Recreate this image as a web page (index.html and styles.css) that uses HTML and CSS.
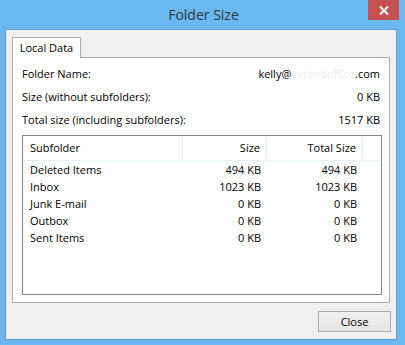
FILE: index.html
```html
<!DOCTYPE html>
<html lang="en">
<head>
<meta charset="utf-8">
<title>Folder Size</title>
<link rel="stylesheet" href="styles.css">
</head>
<body>
<div class="window">
  <div class="titlebar">
    <div class="title">Folder Size</div>
    <div class="close-btn">
      <svg width="10" height="9" viewBox="0 0 10 9" aria-hidden="true"><path d="M1 0.5 L9 8.5 M9 0.5 L1 8.5" stroke="#fff" stroke-width="2"/></svg>
    </div>
  </div>
  <div class="client">
    <div class="tabs">
      <div class="tab">Local Data</div>
    </div>
    <div class="panel">
      <div class="info">
        <div class="info-row"><span>Folder Name:</span><span>kelly@<span class="wm">extendoffice</span>.com</span></div>
        <div class="info-row"><span>Size (without subfolders):</span><span>0 KB</span></div>
        <div class="info-row"><span>Total size (including subfolders):</span><span>1517 KB</span></div>
      </div>
      <div class="list">
        <div class="list-head">
          <div class="hc">Subfolder</div>
          <div class="hc num">Size</div>
          <div class="hc num">Total Size</div>
          <div class="hc last"></div>
        </div>
        <div class="list-row"><div>Deleted Items</div><div class="num">494 KB</div><div class="num">494 KB</div></div>
        <div class="list-row"><div>Inbox</div><div class="num">1023 KB</div><div class="num">1023 KB</div></div>
        <div class="list-row"><div>Junk E-mail</div><div class="num">0 KB</div><div class="num">0 KB</div></div>
        <div class="list-row"><div>Outbox</div><div class="num">0 KB</div><div class="num">0 KB</div></div>
        <div class="list-row"><div>Sent Items</div><div class="num">0 KB</div><div class="num">0 KB</div></div>
      </div>
    </div>
    <div class="footer">
      <button class="btn" type="button">Close</button>
    </div>
  </div>
</div>
</body>
</html>
```

FILE: styles.css
```css
html, body {
  margin: 0;
  padding: 0;
}
body {
  width: 405px;
  height: 345px;
  background: #6ab8ef;
  font-family: "Open Sans", "Noto Sans", sans-serif;
  font-size: 11px;
  color: #000;
  overflow: hidden;
}
.window {
  display: flex;
  flex-direction: column;
  height: 345px;
}
.titlebar {
  height: 29px;
  display: grid;
  grid-template-columns: 1fr auto 1fr;
  align-items: start;
}
.title {
  grid-column: 2;
  font-size: 14px;
  line-height: 29px;
  color: #2e3a40;
  padding-left: 2px;
}
.close-btn {
  grid-column: 3;
  justify-self: end;
  width: 31px;
  height: 20px;
  margin-right: 6px;
  background: #c75050;
  display: flex;
  align-items: center;
  justify-content: center;
}
.close-btn svg {
  display: block;
}
.client {
  margin-left: 5px;
  width: 392px;
  height: 311px;
  box-sizing: border-box;
  border: 1px solid #5a9fd6;
  background: #f0f0f0;
  padding: 7px 5px 0 6px;
  display: flex;
  flex-direction: column;
}
.tabs {
  display: flex;
  height: 20px;
}
.tab {
  width: 69px;
  height: 21px;
  box-sizing: border-box;
  border: 1px solid #acacac;
  border-bottom: none;
  background: #fff;
  text-align: center;
  line-height: 19px;
  position: relative;
  z-index: 1;
}
.panel {
  margin-right: 1px;
  height: 246px;
  box-sizing: border-box;
  border: 1px solid #acacac;
  background: #fff;
  padding: 4px 7px 7px 9px;
  display: flex;
  flex-direction: column;
}
.info {
  padding-right: 2px;
}
.info-row {
  display: flex;
  justify-content: space-between;
  height: 23px;
  line-height: 23px;
}
.wm {
  color: #ececec;
}
.list {
  margin-top: 4px;
  flex: 1;
  border: 1px solid #828790;
}
.list-head {
  display: grid;
  grid-template-columns: 160px 84px 96px 1fr;
  height: 24px;
  border-bottom: 1px solid #eaf0f8;
}
.hc {
  border-right: 1px solid #e3ebf5;
  line-height: 24px;
  padding: 0 6px 0 7px;
}
.hc.last {
  border-right: none;
}
.list-row {
  display: grid;
  grid-template-columns: 160px 84px 96px 1fr;
  height: 17px;
  line-height: 17px;
}
.list-row > div {
  padding: 0 6px 0 7px;
}
.num {
  text-align: right;
}
.footer {
  display: flex;
  justify-content: flex-end;
  padding-top: 8px;
}
.btn {
  width: 73px;
  height: 21px;
  margin: 0;
  border: 1px solid #acacac;
  background: linear-gradient(#f0f0f0, #e5e5e5);
  font-family: inherit;
  font-size: 11px;
  color: #000;
  padding: 0;
}
```
